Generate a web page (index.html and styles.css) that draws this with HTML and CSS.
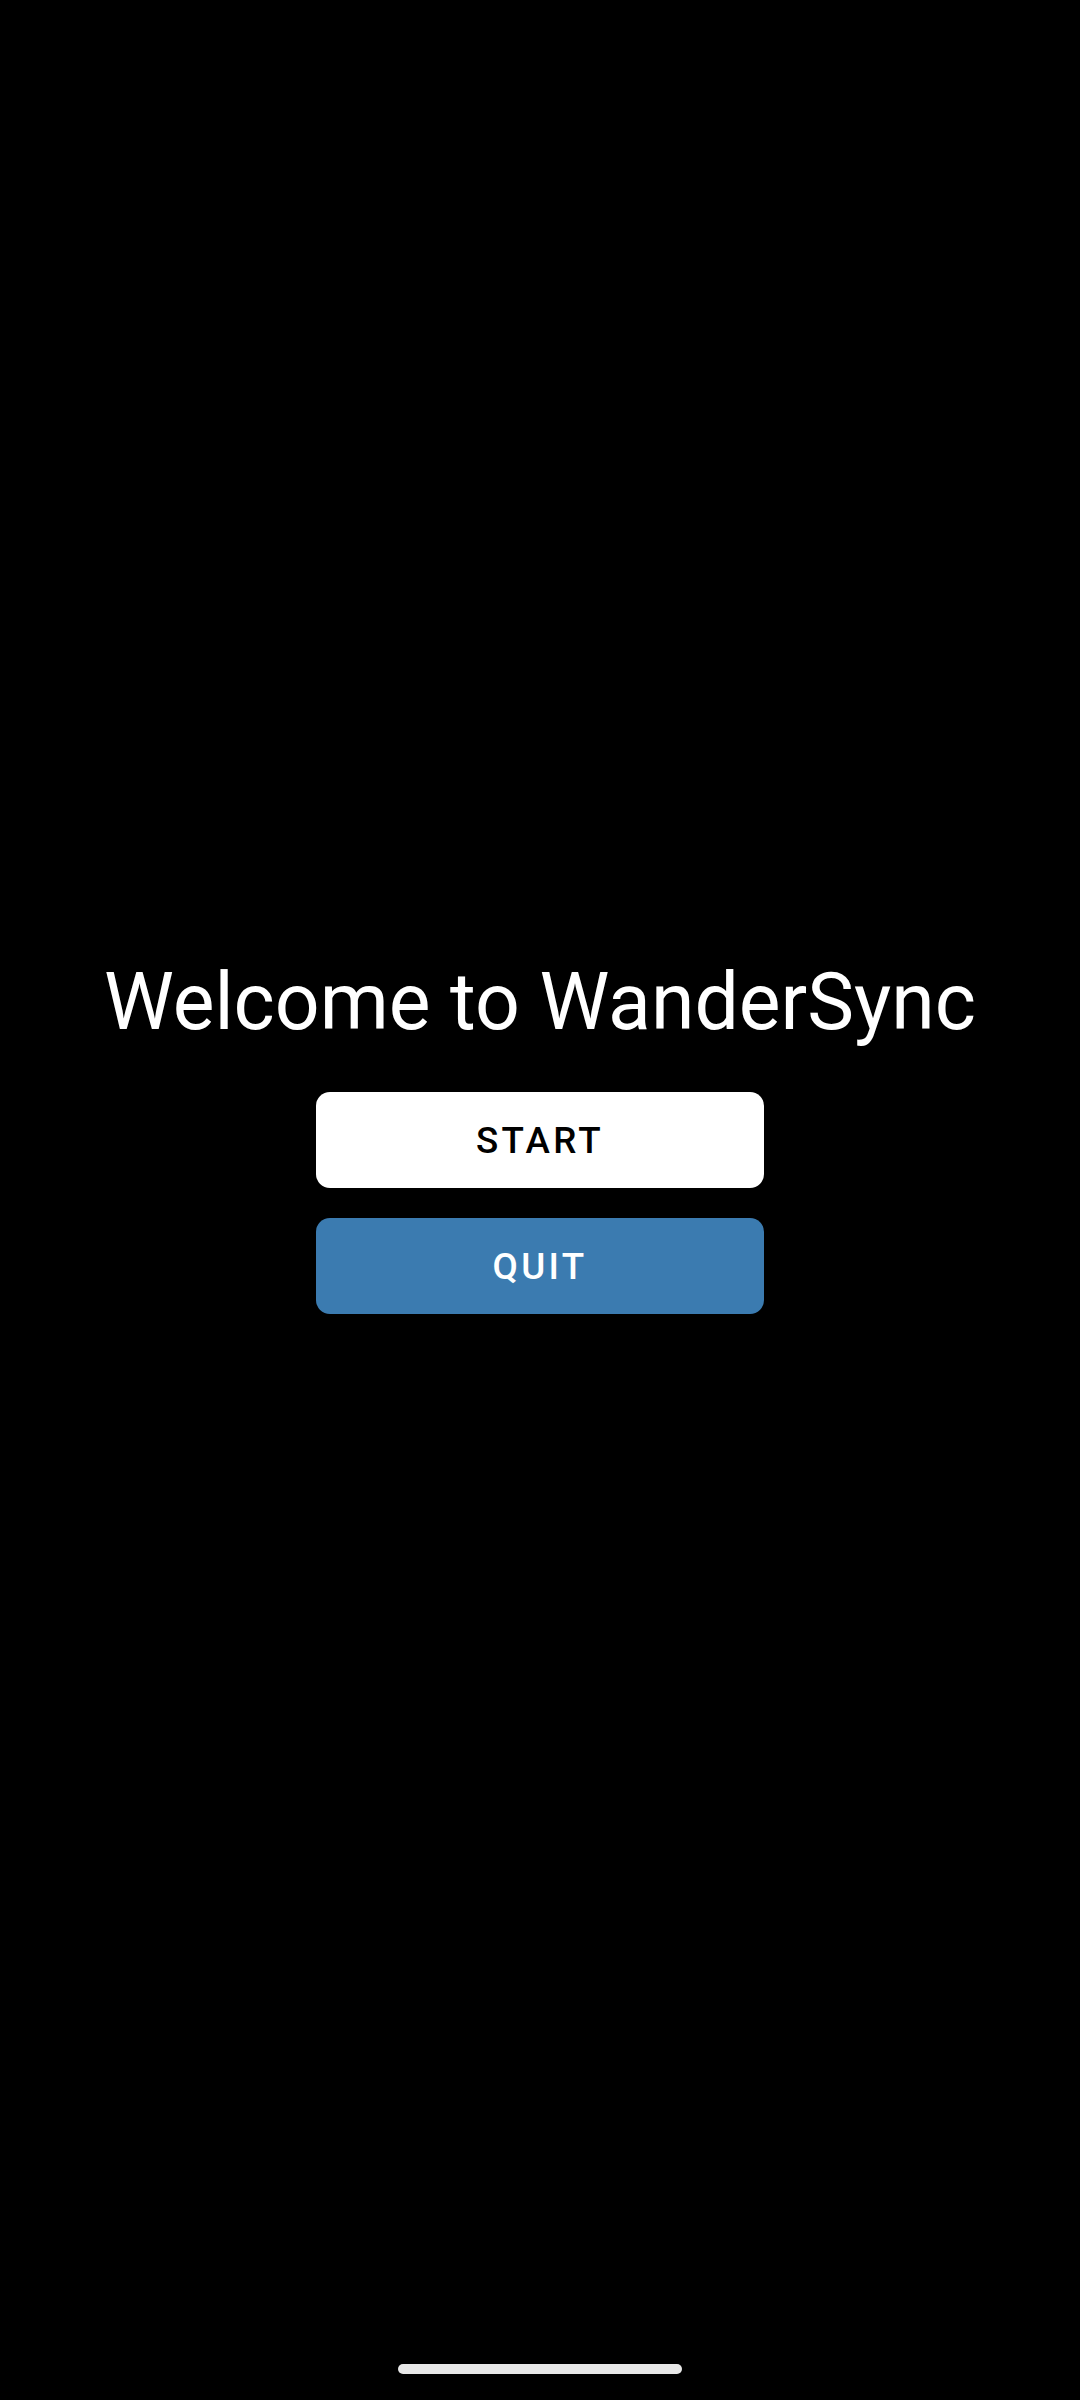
FILE: index.html
```html
<!DOCTYPE html>
<html lang="en">
<head>
   <meta charset="UTF-8">
   <title>WanderSync</title>
   <link rel="stylesheet" href="styles.css">
</head>
<body>

    <main class="welcome">
        <h1 class="welcome-title">Welcome to WanderSync</h1>
        <button class="btn btn-start">START</button>
        <button class="btn btn-quit">QUIT</button>
    </main>

    <div class="nav-bar">
        <span class="home-pill"></span>
    </div>

</body>
</html>
```

FILE: styles.css
```css
html, body{
    height: 100%;
}

body{
    margin: 0;
    background: #000;
    font-family: Roboto, "Noto Sans", sans-serif;
    display: flex;
    flex-direction: column;
}

.welcome{
    flex: 1;
    display: flex;
    flex-direction: column;
    align-items: center;
    justify-content: center;
    padding-bottom: 74px;
}

.welcome-title{
    margin: 0 0 44px;
    color: #fff;
    font-size: 78.75px;
    font-weight: 400;
    line-height: 92px;
}

.btn{
    width: 448px;
    height: 96px;
    border: none;
    border-radius: 14px;
    font-family: Roboto, sans-serif;
    font-size: 36.75px;
    font-weight: 500;
    letter-spacing: 3.3px;
    padding: 0;
}

.btn-start{
    background: #fff;
    color: #000;
}

.btn-quit{
    margin-top: 30px;
    background: #3b7bb0;
    color: #fff;
}

.nav-bar{
    height: 56px;
    display: flex;
    justify-content: center;
}

.home-pill{
    margin-top: 20px;
    width: 284px;
    height: 10px;
    border-radius: 5px;
    background: #e8e8e8;
}
```
